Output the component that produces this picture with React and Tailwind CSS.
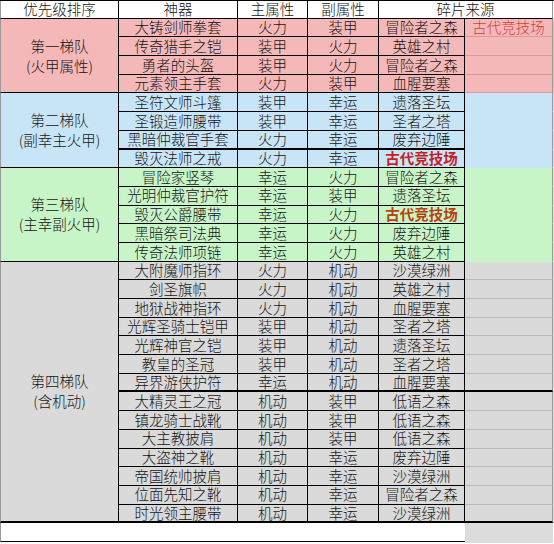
import React from "react";

const groups = [
  {
    title: "第一梯队",
    sub: "(火甲属性)",
    bg: "bg-[#f5b8b9]",
    line5: "border-[#d99a9b]",
    rows: [
      ["大铸剑师拳套", "火力", "装甲", "冒险者之森", "古代竞技场"],
      ["传奇猎手之铠", "装甲", "火力", "英雄之村"],
      ["勇者的头盔", "装甲", "火力", "冒险者之森"],
      ["元素领主手套", "火力", "装甲", "血腥要塞"],
    ],
  },
  {
    title: "第二梯队",
    sub: "(副幸主火甲)",
    bg: "bg-[#c8e5f7]",
    line5: "border-transparent",
    rows: [
      ["圣符文师斗篷", "装甲", "幸运", "遗落圣坛"],
      ["圣锻造师腰带", "装甲", "幸运", "圣者之塔"],
      ["黑暗仲裁官手套", "火力", "幸运", "废弃边陲", null, "mid"],
      ["毁灭法师之戒", "火力", "幸运", "古代竞技场", null, null, "text-[#c81e28]"],
    ],
  },
  {
    title: "第三梯队",
    sub: "(主幸副火甲)",
    bg: "bg-[#c8f5c8]",
    line5: "border-transparent",
    rows: [
      ["冒险家竖琴", "幸运", "火力", "冒险者之森"],
      ["光明仲裁官护符", "幸运", "装甲", "遗落圣坛"],
      ["毁灭公爵腰带", "幸运", "火力", "古代竞技场", null, null, "text-[#b8420e]"],
      ["黑暗祭司法典", "幸运", "火力", "废弃边陲"],
      ["传奇法师项链", "幸运", "火力", "英雄之村"],
    ],
  },
  {
    title: "第四梯队",
    sub: "(含机动)",
    bg: "bg-[#dadada]",
    line5: "border-[#b8b8b8]",
    rows: [
      ["大附魔师指环", "火力", "机动", "沙漠绿洲"],
      ["剑圣旗帜", "火力", "机动", "英雄之村"],
      ["地狱战神指环", "火力", "机动", "血腥要塞"],
      ["光辉圣骑士铠甲", "装甲", "机动", "圣者之塔"],
      ["光辉神官之铠", "装甲", "机动", "遗落圣坛"],
      ["教皇的圣冠", "装甲", "机动", "圣者之塔"],
      ["异界游侠护符", "幸运", "机动", "血腥要塞", null, "full"],
      ["大精灵王之冠", "机动", "装甲", "低语之森"],
      ["镇龙骑士战靴", "机动", "装甲", "低语之森"],
      ["大主教披肩", "机动", "装甲", "低语之森"],
      ["大盗神之靴", "机动", "幸运", "废弃边陲"],
      ["帝国统帅披肩", "机动", "幸运", "沙漠绿洲"],
      ["位面先知之靴", "机动", "幸运", "冒险者之森"],
      ["时光领主腰带", "机动", "幸运", "沙漠绿洲", null, "last"],
    ],
  },
];

const cell = "flex items-center justify-center border-r border-black";

const Row = ({ row, line5 }) => {
  const [name, main, sub, src, extra, thick, srcColor] = row;
  const b = thick ? "border-b-2 border-b-black" : "border-b border-b-black";
  const b5 =
    thick === "full" || thick === "last" ? "border-b-2 border-b-black" : `border-b ${line5}`;
  return (
    <div className="flex h-[18.7px]">
      <div className={`${cell} ${b} w-[119px]`}>{name}</div>
      <div className={`${cell} ${b} w-[70px]`}>{main}</div>
      <div className={`${cell} ${b} w-[71px]`}>{sub}</div>
      <div className={`${cell} ${b} w-[86px] ${srcColor ? srcColor + " font-bold" : ""}`}>{src}</div>
      <div className={`flex items-center justify-center w-[88px] border-r border-r-[#9a9a9a] ${b5} text-[#d43c3c]`}>
        {extra}
      </div>
    </div>
  );
};

export default function App() {
  return (
    <div className="w-[554px] h-[544px] bg-white text-[#151515] text-[14.5px] leading-none font-light font-['Noto_Sans_CJK_SC','Noto_Sans',sans-serif] overflow-hidden">
      <div className="flex h-[18.7px] border-t border-black">
        <div className={`${cell} border-b border-l border-l-[#9a9a9a] w-[119px]`}>优先级排序</div>
        <div className={`${cell} border-b w-[119px]`}>神器</div>
        <div className={`${cell} border-b w-[70px]`}>主属性</div>
        <div className={`${cell} border-b w-[71px]`}>副属性</div>
        <div className="flex items-center justify-center border-b border-black border-r border-r-[#9a9a9a] w-[174px]">
          碎片来源
        </div>
      </div>
      {groups.map((g, gi) => (
        <div key={g.title} className={`flex ${g.bg}`}>
          <div
            className={`flex flex-col items-center justify-center w-[119px] border-r border-black border-l border-l-[#9a9a9a] leading-[20px] ${
              gi === groups.length - 1 ? "border-b-2" : "border-b"
            }`}
          >
            <span>{g.title}</span>
            <span>{g.sub}</span>
          </div>
          <div className="flex flex-col">
            {g.rows.map((r) => (
              <Row key={r[0]} row={r} line5={g.line5} />
            ))}
          </div>
        </div>
      ))}
      <div className="flex h-[20px]">
        <div className="w-[465px] h-[19px] bg-white border-b border-black border-l border-l-[#9a9a9a]"></div>
        <div className="w-[88px] bg-[#dcdcdc]"></div>
      </div>
    </div>
  );
}
